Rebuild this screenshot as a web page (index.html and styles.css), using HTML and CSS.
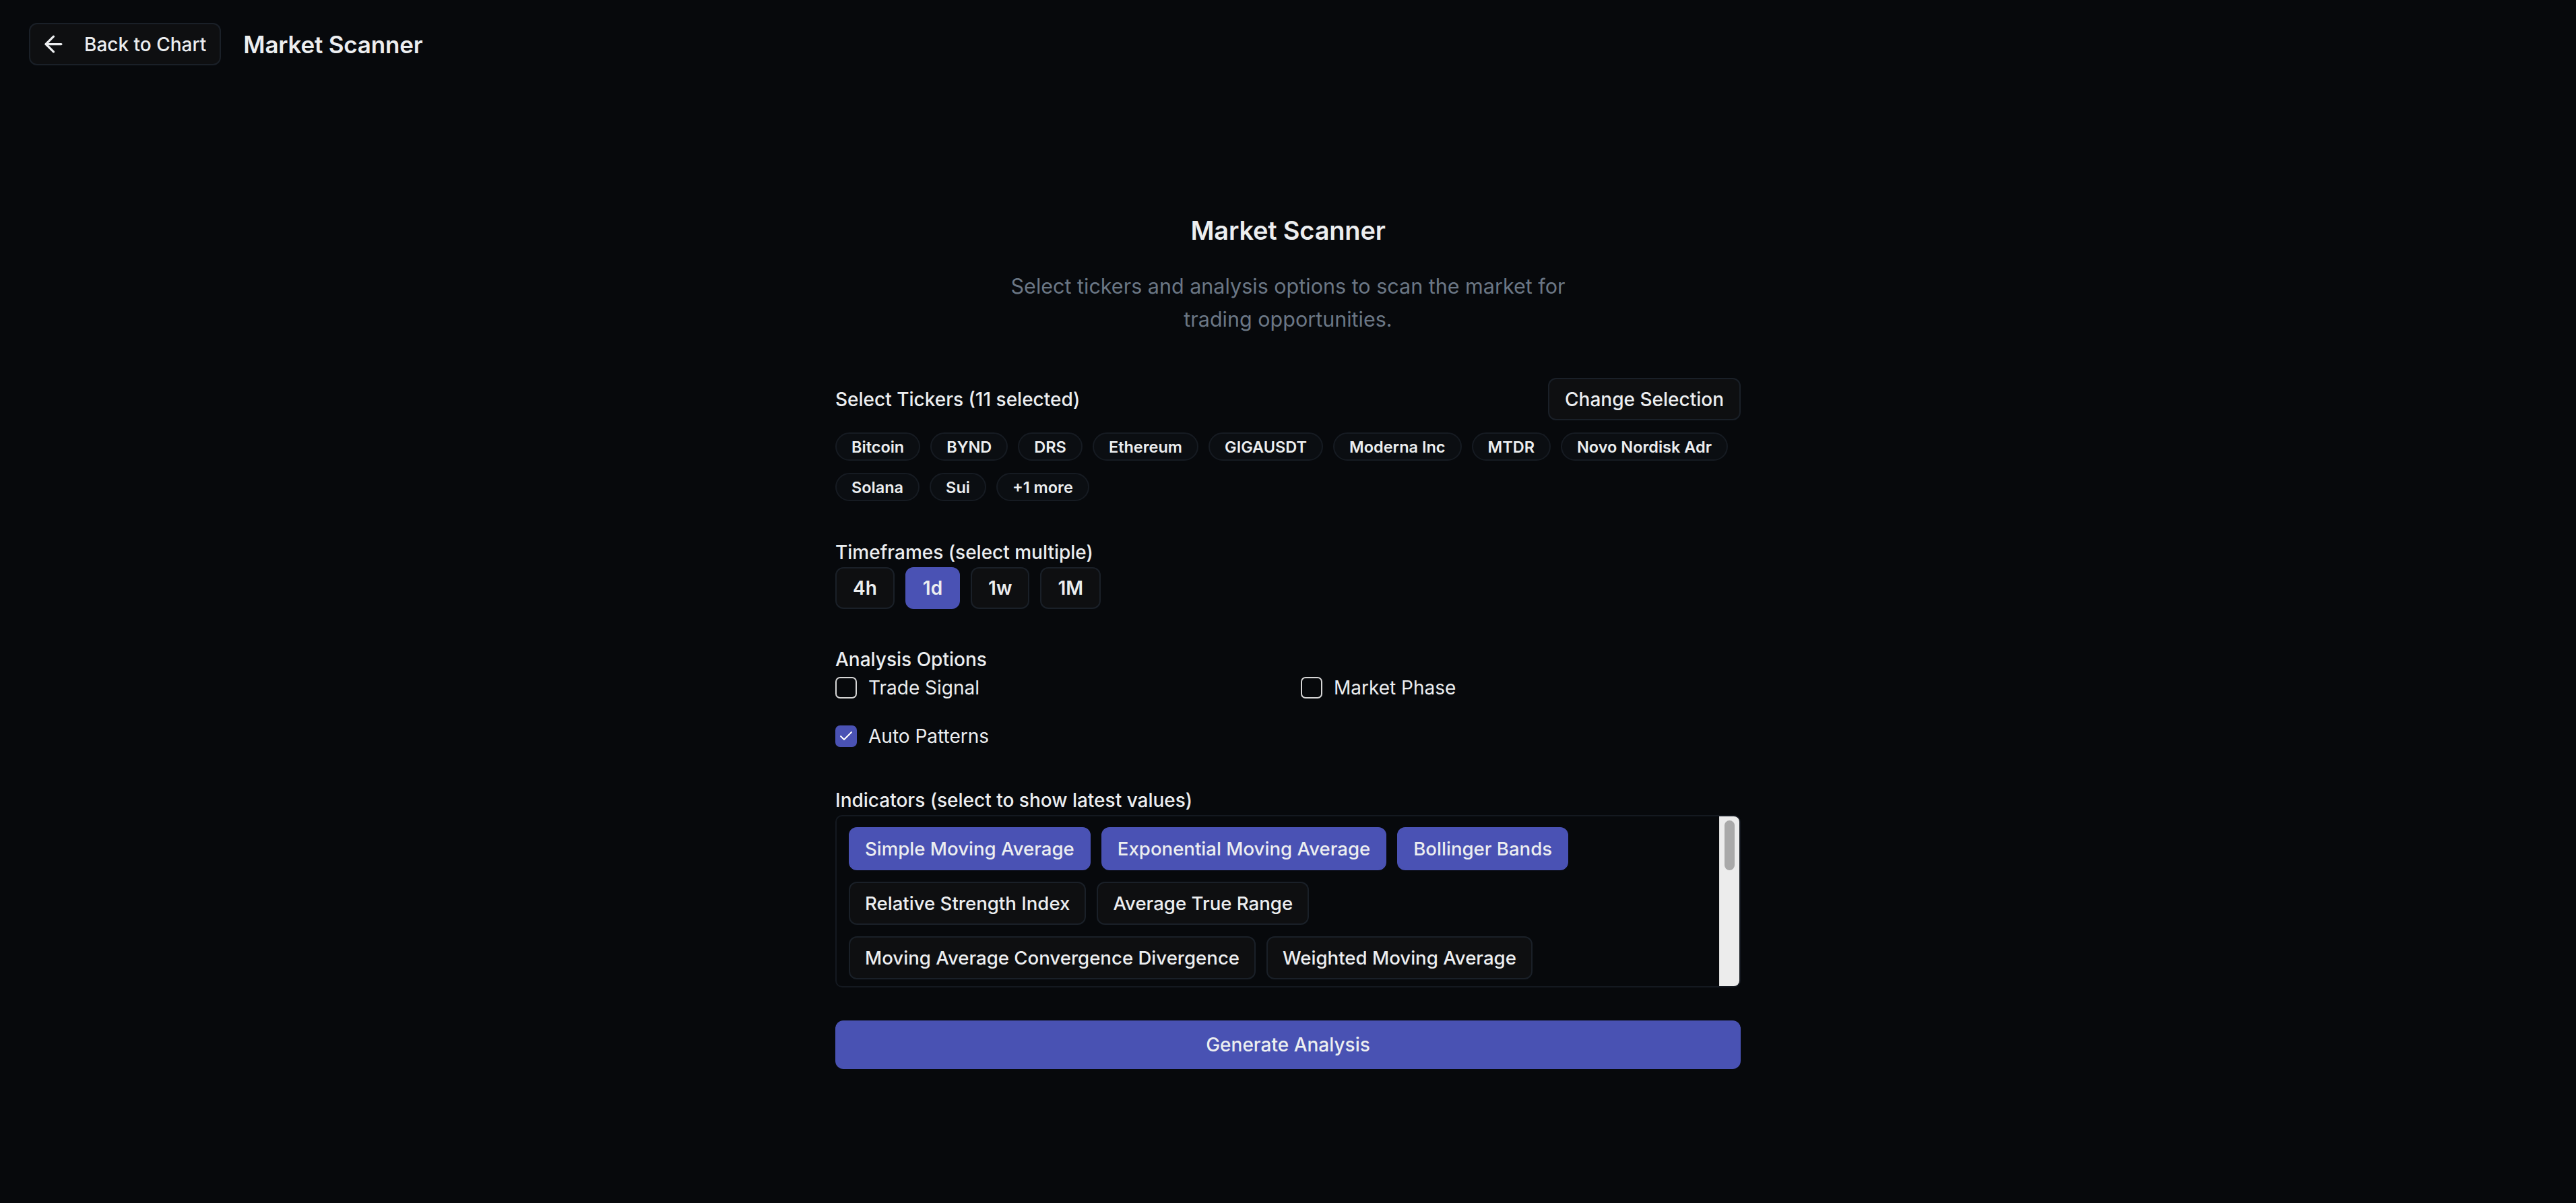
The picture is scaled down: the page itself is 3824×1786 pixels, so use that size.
FILE: index.html
```html
<!DOCTYPE html>
<html lang="en">
<head>
  <meta charset="UTF-8">
  <meta name="viewport" content="width=device-width, initial-scale=1.0">
  <title>Market Scanner</title>
  <link rel="stylesheet" href="styles.css">
</head>
<body>
  <!-- Top bar -->
  <header class="topbar">
    <button class="btn-outline back-btn" type="button">
      <svg class="icon" viewBox="0 0 24 24" fill="none" stroke="currentColor" stroke-width="2" stroke-linecap="round" stroke-linejoin="round">
        <path d="m12 19-7-7 7-7"></path>
        <path d="M19 12H5"></path>
      </svg>
      <span>Back to Chart</span>
    </button>
    <h1 class="topbar-title">Market Scanner</h1>
  </header>

  <main class="scanner">
    <h2 class="scanner-title">Market Scanner</h2>
    <p class="scanner-subtitle">Select tickers and analysis options to scan the market for trading opportunities.</p>

    <!-- Tickers -->
    <section class="tickers">
      <div class="tickers-head">
        <span class="label">Select Tickers (11 selected)</span>
        <button class="btn-outline change-btn" type="button">Change Selection</button>
      </div>
      <div class="chips">
        <span class="chip">Bitcoin</span>
        <span class="chip">BYND</span>
        <span class="chip">DRS</span>
        <span class="chip">Ethereum</span>
        <span class="chip">GIGAUSDT</span>
        <span class="chip">Moderna Inc</span>
        <span class="chip">MTDR</span>
        <span class="chip">Novo Nordisk Adr</span>
        <span class="chip">Solana</span>
        <span class="chip">Sui</span>
        <span class="chip">+1 more</span>
      </div>
    </section>

    <!-- Timeframes -->
    <section class="timeframes">
      <div class="label">Timeframes (select multiple)</div>
      <div class="tf-list">
        <button class="tf" type="button">4h</button>
        <button class="tf active" type="button">1d</button>
        <button class="tf" type="button">1w</button>
        <button class="tf" type="button">1M</button>
      </div>
    </section>

    <!-- Analysis options -->
    <section class="options">
      <div class="label">Analysis Options</div>
      <div class="option-grid">
        <label class="option">
          <span class="box"></span>
          <span>Trade Signal</span>
        </label>
        <label class="option">
          <span class="box"></span>
          <span>Market Phase</span>
        </label>
        <label class="option">
          <span class="box checked">
            <svg viewBox="0 0 24 24" fill="none" stroke="currentColor" stroke-width="2" stroke-linecap="round" stroke-linejoin="round"><path d="M20 6 9 17l-5-5"></path></svg>
          </span>
          <span>Auto Patterns</span>
        </label>
      </div>
    </section>

    <section class="indicators">
      <div class="label">Indicators (select to show latest values)</div>
      <div class="indicator-box">
        <div class="indicator-list">
          <button class="pill active" type="button">Simple Moving Average</button>
          <button class="pill active" type="button">Exponential Moving Average</button>
          <button class="pill active" type="button">Bollinger Bands</button>
          <button class="pill" type="button">Relative Strength Index</button>
          <button class="pill" type="button">Average True Range</button>
          <button class="pill" type="button">Moving Average Convergence Divergence</button>
          <button class="pill" type="button">Weighted Moving Average</button>
        </div>
        <div class="scrollbar">
          <div class="scrollbar-thumb"></div>
        </div>
      </div>
    </section>

    <button class="generate" type="button">Generate Analysis</button>
  </main>
</body>
</html>
```

FILE: styles.css
```css
/* Base */
html, body {
  margin: 0;
  min-height: 100%;
}

body {
  background-color: #07090c;
  color: #eceef0;
  font-family: Inter, "Noto Sans", sans-serif;
  min-height: 1786px;
}

button {
  font-family: inherit;
  color: inherit;
  cursor: pointer;
}

/* Top bar */
.topbar {
  display: flex;
  align-items: center;
  gap: 33px;
  padding: 34px 43px 0;
}

.btn-outline {
  display: inline-flex;
  align-items: center;
  height: 63px;
  box-sizing: border-box;
  background-color: #0e0f11;
  border: 2px solid #1a2028;
  border-radius: 12px;
  font-size: 28px;
  font-weight: 500;
}

.back-btn {
  gap: 26px;
  padding: 0 20px 0 15px;
}

.icon {
  width: 39px;
  height: 39px;
}

.topbar-title {
  margin: 0;
  font-size: 35px;
  font-weight: 600;
  letter-spacing: -0.2px;
}

/* Scanner column */
.scanner {
  width: 1344px;
  margin: 217px auto 0;
}

.scanner-title {
  margin: 0;
  text-align: center;
  font-size: 38px;
  line-height: 56px;
  font-weight: 600;
  letter-spacing: -0.2px;
}

.scanner-subtitle {
  margin: 30px auto 0;
  max-width: 880px;
  text-align: center;
  color: #6b7785;
  font-size: 30.5px;
  line-height: 49px;
}

.label {
  font-size: 28px;
  line-height: 40px;
  font-weight: 500;
}

/* Tickers */
.tickers {
  margin-top: 63px;
}

.tickers-head {
  display: flex;
  justify-content: space-between;
  align-items: center;
}

.change-btn {
  padding: 0 23px;
}

.chips {
  display: flex;
  flex-wrap: wrap;
  gap: 18px 15px;
  margin-top: 18px;
}

.chip {
  display: inline-flex;
  align-items: center;
  height: 42px;
  box-sizing: border-box;
  padding: 0 22px;
  background-color: #0b0e12;
  border: 2px solid #161b22;
  border-radius: 21px;
  font-size: 23.5px;
  font-weight: 600;
}

/* Timeframes */
.timeframes {
  margin-top: 56px;
}

.tf-list {
  display: flex;
  gap: 16px;
  margin-top: 2px;
}

.tf {
  height: 62px;
  box-sizing: border-box;
  padding: 0 24px;
  background-color: #0e0f11;
  border: 2px solid #1a2028;
  border-radius: 12px;
  font-size: 28px;
  font-weight: 600;
}

.tf.active {
  background-color: #4a52b4;
  border-color: #4a52b4;
}

/* Analysis options */
.options {
  margin-top: 55px;
}

.option-grid {
  display: grid;
  grid-template-columns: 1fr 1fr;
  gap: 40px 38px;
  margin-top: 6px;
}

.option {
  display: flex;
  align-items: center;
  gap: 17px;
  height: 32px;
  font-size: 28px;
}

.box {
  display: inline-flex;
  align-items: center;
  justify-content: center;
  width: 32px;
  height: 32px;
  box-sizing: border-box;
  border: 2px solid #d6d6d6;
  border-radius: 7px;
}

.box.checked {
  background-color: #4a52b4;
  border-color: #4a52b4;
  color: #ffffff;
}

.box svg {
  width: 24px;
  height: 24px;
}

/* Indicators */
.indicators {
  margin-top: 59px;
}

.indicator-box {
  display: flex;
  height: 256px;
  box-sizing: border-box;
  margin-top: 2px;
  border: 2px solid #141920;
  border-radius: 10px;
  overflow: hidden;
}

.indicator-list {
  flex: 1;
  display: flex;
  flex-wrap: wrap;
  align-content: flex-start;
  gap: 17px 16px;
  padding: 16px 16px 16px 18px;
}

.scrollbar {
  width: 30px;
  box-sizing: border-box;
  padding-top: 6px;
  background-color: #ececec;
  border-left: 1px solid #dcdcdc;
}

.scrollbar-thumb {
  width: 15px;
  height: 74px;
  margin: 0 auto;
  border-radius: 8px;
  background-color: #a9a9a9;
}

.pill {
  height: 64px;
  box-sizing: border-box;
  padding: 0 22px;
  background-color: #0e0f11;
  border: 2px solid #1a2028;
  border-radius: 12px;
  font-size: 27.6px;
  font-weight: 500;
  white-space: nowrap;
}

.pill.active {
  background-color: #4a52b4;
  border-color: #4a52b4;
}

/* Generate button */
.generate {
  display: block;
  width: 100%;
  height: 72px;
  margin-top: 49px;
  background-color: #4952b3;
  border: none;
  border-radius: 12px;
  font-size: 28px;
  font-weight: 500;
}
```
